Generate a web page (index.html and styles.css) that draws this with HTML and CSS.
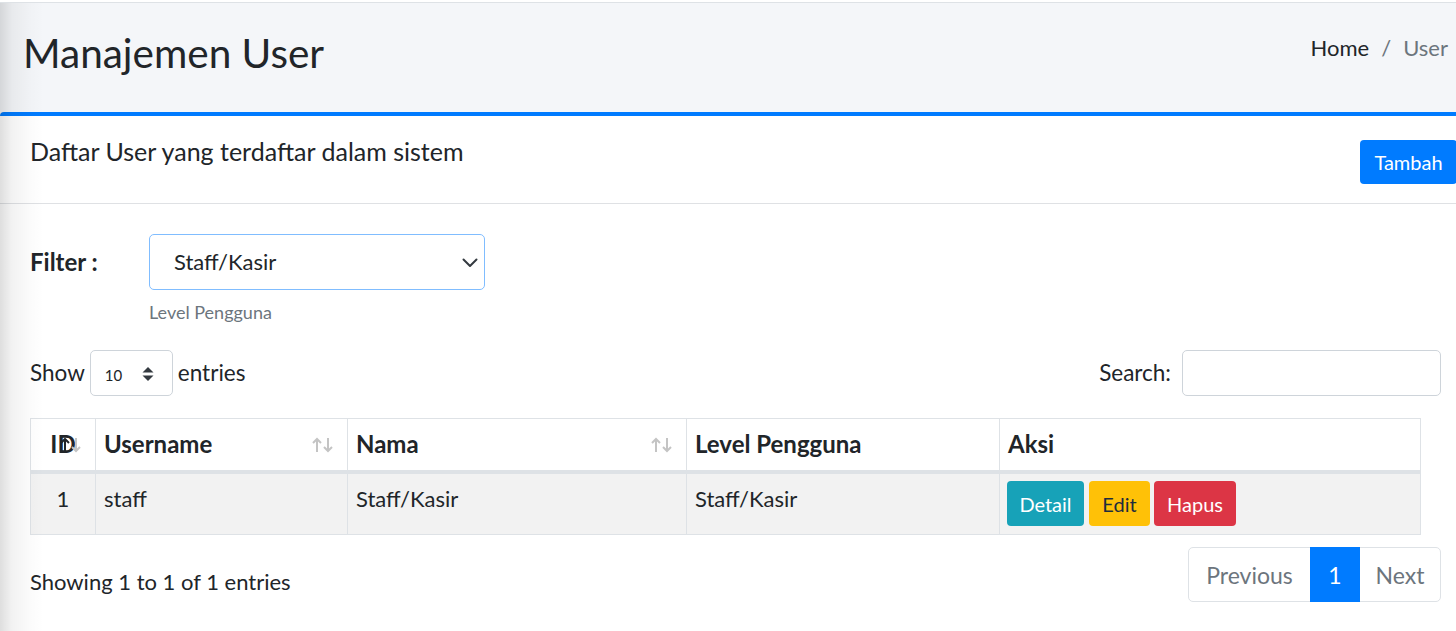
FILE: index.html
```html
<!DOCTYPE html>
<html lang="id">
<head>
<meta charset="utf-8">
<title>Manajemen User</title>
<link rel="stylesheet" href="styles.css">
</head>
<body>
<div class="page">
  <div class="navline"></div>
  <section class="content-header">
    <h1 class="page-title">Manajemen User</h1>
    <ol class="breadcrumb">
      <li class="crumb crumb-link">Home</li>
      <li class="crumb-sep">/</li>
      <li class="crumb crumb-active">User</li>
    </ol>
  </section>
  <section class="content">
    <div class="card">
      <div class="card-header">
        <h3 class="card-title">Daftar User yang terdaftar dalam sistem</h3>
        <a class="btn btn-primary btn-tambah">Tambah</a>
      </div>
      <div class="card-body">
        <div class="filter-row">
          <label class="filter-label">Filter :</label>
          <div class="filter-control">
            <div class="select select-lg">
              <span class="select-value">Staff/Kasir</span>
              <svg class="chev" width="16" height="10" viewBox="0 0 16 10"><path d="M1.5 1.5 L8 8 L14.5 1.5" fill="none" stroke="#343a40" stroke-width="2" stroke-linecap="round" stroke-linejoin="round"/></svg>
            </div>
            <small class="help">Level Pengguna</small>
          </div>
        </div>

        <div class="dt-top">
          <div class="dt-length">
            <span>Show</span>
            <div class="select select-sm">
              <span class="select-value-sm">10</span>
              <svg class="updown" width="12" height="16" viewBox="0 0 12 16"><path d="M6 1 L11.5 6.5 H0.5 Z" fill="#343a40"/><path d="M6 15 L11.5 9.5 H0.5 Z" fill="#343a40"/></svg>
            </div>
            <span>entries</span>
          </div>
          <div class="dt-search">
            <span>Search:</span>
            <div class="input"></div>
          </div>
        </div>

        <table class="table">
          <thead>
            <tr>
              <th class="col-id sortable">ID
                <span class="sort"><svg width="22" height="16" viewBox="0 0 22 16"><path d="M5 15 V2 M1 6 L5 2 L9 6" fill="none" stroke="#212529" stroke-width="2"/><path d="M16 1 V14 M12 10 L16 14 L20 10" fill="none" stroke="#c4c4c4" stroke-width="2"/></svg></span>
              </th>
              <th class="col-user sortable">Username
                <span class="sort"><svg width="22" height="16" viewBox="0 0 22 16"><path d="M5 15 V2 M1 6 L5 2 L9 6" fill="none" stroke="#c4c4c4" stroke-width="2"/><path d="M16 1 V14 M12 10 L16 14 L20 10" fill="none" stroke="#c4c4c4" stroke-width="2"/></svg></span>
              </th>
              <th class="col-nama sortable">Nama
                <span class="sort"><svg width="22" height="16" viewBox="0 0 22 16"><path d="M5 15 V2 M1 6 L5 2 L9 6" fill="none" stroke="#c4c4c4" stroke-width="2"/><path d="M16 1 V14 M12 10 L16 14 L20 10" fill="none" stroke="#c4c4c4" stroke-width="2"/></svg></span>
              </th>
              <th class="col-level">Level Pengguna</th>
              <th class="col-aksi">Aksi</th>
            </tr>
          </thead>
          <tbody>
            <tr class="odd">
              <td class="center">1</td>
              <td>staff</td>
              <td>Staff/Kasir</td>
              <td>Staff/Kasir</td>
              <td>
                <div class="aksi">
                  <a class="btn btn-info">Detail</a>
                  <a class="btn btn-warning">Edit</a>
                  <a class="btn btn-danger">Hapus</a>
                </div>
              </td>
            </tr>
          </tbody>
        </table>

        <div class="dt-bottom">
          <div class="dt-info">Showing 1 to 1 of 1 entries</div>
          <ul class="pagination">
            <li class="page-item page-prev">Previous</li>
            <li class="page-item page-num active">1</li>
            <li class="page-item page-next">Next</li>
          </ul>
        </div>
      </div>
    </div>
  </section>
  <div class="sidebar-shadow"></div>
</div>
</body>
</html>
```

FILE: styles.css
```css
html, body {
  margin: 0;
  padding: 0;
  overflow: hidden;
  background: #ffffff;
}
body {
  font-family: "Source Sans Pro", "Lato", "Liberation Sans", sans-serif;
  font-size: 22.5px;
  line-height: 34px;
  color: #212529;
}
.page {
  position: relative;
  width: 1471px;
  min-height: 631px;
}
.navline {
  height: 2px;
  background: #ffffff;
  border-bottom: 1px solid #dee2e6;
}
.content-header {
  background: #f4f6f9;
  height: 109px;
  display: flex;
  justify-content: space-between;
  align-items: flex-start;
  padding: 0 23px 0 23px;
  box-sizing: border-box;
}
.page-title {
  margin: 27px 0 0 0;
  font-size: 40.5px;
  line-height: 46px;
  font-weight: 400;
}
.breadcrumb {
  list-style: none;
  margin: 30px 0 0 0;
  padding: 0;
  display: flex;
  gap: 12px;
  font-size: 22px;
  line-height: 30px;
}
.crumb-link { color: #212529; }
.crumb-sep, .crumb-active { color: #6c757d; }

.content { background: #f4f6f9; }
.card {
  background: #ffffff;
  border-top: 4px solid #007bff;
  border-top-left-radius: 4px;
}
.card-header {
  height: 88px;
  box-sizing: border-box;
  border-bottom: 1px solid #dfe1e4;
  display: flex;
  justify-content: space-between;
  align-items: flex-start;
  padding: 0 14px 0 30px;
}
.card-title {
  margin: 20px 0 0 0;
  font-size: 25px;
  line-height: 30px;
  font-weight: 400;
}
.btn {
  display: inline-flex;
  align-items: center;
  justify-content: center;
  box-sizing: border-box;
  border-radius: 4px;
  font-size: 20px;
  line-height: 30px;
  text-decoration: none;
  cursor: pointer;
}
.btn-primary { background: #007bff; color: #ffffff; }
.btn-tambah {
  margin-top: 24px;
  width: 97px;
  height: 44px;
}

.card-body {
  padding: 30px 30px 0 30px;
}
.filter-row {
  display: flex;
  align-items: flex-start;
}
.filter-label {
  width: 119px;
  font-size: 24px;
  font-weight: 700;
  line-height: 56px;
}
.filter-control {
  display: flex;
  flex-direction: column;
}
.select {
  position: relative;
  box-sizing: border-box;
  border-radius: 5px;
  display: flex;
  align-items: center;
  background: #ffffff;
}
.select-lg {
  width: 336px;
  height: 56px;
  border: 1px solid #80bdff;
  padding-left: 24px;
}
.select-value { font-size: 22px; }
.chev {
  position: absolute;
  right: 6px;
  top: 23px;
}
.help {
  margin-top: 10px;
  font-size: 18px;
  line-height: 24px;
  color: #6c757d;
}

.dt-top {
  margin-top: 26px;
  display: flex;
  justify-content: space-between;
  align-items: center;
  height: 46px;
}
.dt-length, .dt-search {
  display: flex;
  align-items: center;
}
.dt-length { gap: 5px; }
.dt-search { gap: 11px; }
.select-sm {
  width: 83px;
  height: 46px;
  border: 1px solid #ced4da;
  padding-left: 14px;
}
.select-value-sm {
  font-size: 15px;
  padding-top: 3px;
}
.updown {
  position: absolute;
  left: 51px;
  top: 15px;
}
.input {
  width: 259px;
  height: 46px;
  box-sizing: border-box;
  border: 1px solid #ced4da;
  border-radius: 5px;
}

.table {
  margin-top: 22px;
  width: 1391px;
  border-collapse: collapse;
  table-layout: fixed;
}
.table th, .table td {
  border: 1px solid #dee2e6;
  text-align: left;
  vertical-align: top;
}
.table th {
  position: relative;
  font-size: 24px;
  font-weight: 700;
  line-height: 36px;
  padding: 7px 8px 8px 8px;
  border-bottom: 4px solid #dee2e6;
}
.table td {
  font-size: 22px;
  line-height: 36px;
  padding: 7px 8px 8px 8px;
}
.table th.col-id { text-align: center; }
.col-id { width: 48px; }
.col-user { width: 235px; }
.col-nama { width: 322px; }
.col-level { width: 296px; }
.table tbody tr.odd { background: #f2f2f2; }
.table td.center { text-align: center; }
.sort {
  position: absolute;
  right: 13px;
  top: 18px;
  line-height: 0;
}
.aksi {
  display: flex;
  gap: 5px;
  margin-left: -1px;
}
.aksi .btn { height: 45px; }
.btn-info { background: #17a2b8; color: #ffffff; width: 77px; }
.btn-warning { background: #ffc107; color: #1f2d3d; width: 61px; }
.btn-danger { background: #dc3545; color: #ffffff; width: 82px; margin-left: -1px; }

.dt-bottom {
  margin-top: 12px;
  display: flex;
  justify-content: space-between;
  align-items: flex-start;
  width: 1411px;
}
.dt-info {
  margin-top: 18px;
  font-size: 22px;
}
.pagination {
  list-style: none;
  margin: 0;
  padding: 0;
  display: flex;
  border: 1px solid #dee2e6;
  border-radius: 5px;
  height: 55px;
  box-sizing: border-box;
}
.page-item {
  display: flex;
  align-items: center;
  justify-content: center;
  color: #6c757d;
  font-size: 23px;
}
.page-prev { width: 121px; }
.page-num { width: 50px; }
.page-next { width: 80px; }
.page-item.active {
  background: #007bff;
  color: #ffffff;
  margin: -1px 0;
}
.sidebar-shadow {
  position: absolute;
  left: 0;
  top: 3px;
  bottom: 0;
  width: 44px;
  background: linear-gradient(to right, rgba(0,0,0,0.13), rgba(0,0,0,0.05) 12px, rgba(0,0,0,0.015) 30px, rgba(0,0,0,0) 44px);
  pointer-events: none;
}
```
